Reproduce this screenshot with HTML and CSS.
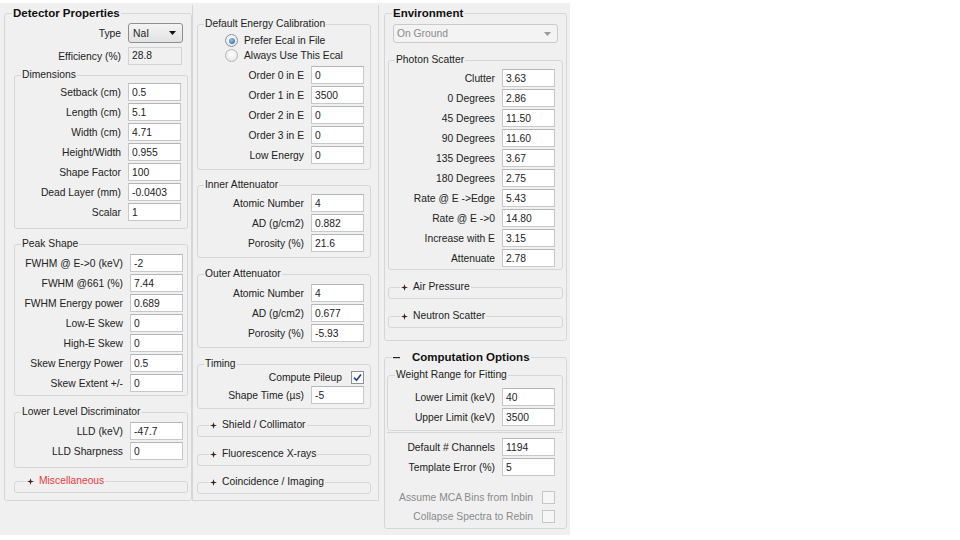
FILE: index.html
```html
<!DOCTYPE html>
<html>
<head>
<meta charset="utf-8">
<title>Detector Properties</title>
<link rel="stylesheet" href="styles.css">
</head>
<body>
<div class="app">
  <fieldset class="col1">
    <legend class="title">Detector Properties</legend>
    <div class="row k123 typerow"><label>Type</label><div class="combo nai"><span>NaI</span><svg class="arr" width="7" height="4" viewBox="0 0 7 4"><path d="M0 0H7L3.5 4Z"/></svg></div></div>
    <div class="row k123 effrow"><label>Efficiency (%)</label><div class="ro">28.8</div></div>
    <fieldset class="sub dims k113">
      <legend>Dimensions</legend>
      <div class="row"><label>Setback (cm)</label><input class="field" value="0.5"></div>
      <div class="row"><label>Length (cm)</label><input class="field" value="5.1"></div>
      <div class="row"><label>Width (cm)</label><input class="field" value="4.71"></div>
      <div class="row"><label>Height/Width</label><input class="field" value="0.955"></div>
      <div class="row"><label>Shape Factor</label><input class="field" value="100"></div>
      <div class="row"><label>Dead Layer (mm)</label><input class="field" value="-0.0403"></div>
      <div class="row"><label>Scalar</label><input class="field" value="1"></div>
    </fieldset>
    <fieldset class="sub peak k115">
      <legend>Peak Shape</legend>
      <div class="row"><label>FWHM @ E-&gt;0 (keV)</label><input class="field" value="-2"></div>
      <div class="row"><label>FWHM @661 (%)</label><input class="field" value="7.44"></div>
      <div class="row"><label>FWHM Energy power</label><input class="field" value="0.689"></div>
      <div class="row"><label>Low-E Skew</label><input class="field" value="0"></div>
      <div class="row"><label>High-E Skew</label><input class="field" value="0"></div>
      <div class="row"><label>Skew Energy Power</label><input class="field" value="0.5"></div>
      <div class="row"><label>Skew Extent +/-</label><input class="field" value="0"></div>
    </fieldset>
    <fieldset class="sub lld k115">
      <legend>Lower Level Discriminator</legend>
      <div class="row"><label>LLD (keV)</label><input class="field" value="-47.7"></div>
      <div class="row"><label>LLD Sharpness</label><input class="field" value="0"></div>
    </fieldset>
    <fieldset class="sub collapsed misc">
      <legend><svg class="mk" width="7" height="7" viewBox="0 0 7 7"><path d="M3.5 0L4.2 2.8L7 3.5L4.2 4.2L3.5 7L2.8 4.2L0 3.5L2.8 2.8Z"/><circle cx="3.5" cy="3.5" r="1"/></svg><span class="red">Miscellaneous</span></legend>
    </fieldset>
  </fieldset>

  <div class="col2">
    <fieldset class="sub2 ecal k113">
      <legend>Default Energy Calibration</legend>
      <div class="radrow"><span class="radio on"></span>Prefer Ecal in File</div>
      <div class="radrow"><span class="radio"></span>Always Use This Ecal</div>
      <div class="row gap2"><label>Order 0 in E</label><input class="field" value="0"></div>
      <div class="row"><label>Order 1 in E</label><input class="field" value="3500"></div>
      <div class="row"><label>Order 2 in E</label><input class="field" value="0"></div>
      <div class="row"><label>Order 3 in E</label><input class="field" value="0"></div>
      <div class="row"><label>Low Energy</label><input class="field" value="0"></div>
    </fieldset>
    <fieldset class="sub2 inner k113">
      <legend>Inner Attenuator</legend>
      <div class="row"><label>Atomic Number</label><input class="field" value="4"></div>
      <div class="row"><label>AD (g/cm2)</label><input class="field" value="0.882"></div>
      <div class="row"><label>Porosity (%)</label><input class="field" value="21.6"></div>
    </fieldset>
    <fieldset class="sub2 outer k113">
      <legend>Outer Attenuator</legend>
      <div class="row"><label>Atomic Number</label><input class="field" value="4"></div>
      <div class="row"><label>AD (g/cm2)</label><input class="field" value="0.677"></div>
      <div class="row"><label>Porosity (%)</label><input class="field" value="-5.93"></div>
    </fieldset>
    <fieldset class="sub2 timing k113">
      <legend>Timing</legend>
      <div class="chkrow">Compute Pileup<span class="box"><svg width="9" height="9" viewBox="0 0 9 9"><path d="M1 4.6L3.5 7.2L8 1.4"/></svg></span></div>
      <div class="row"><label>Shape Time (µs)</label><input class="field" value="-5"></div>
    </fieldset>
    <fieldset class="sub2 collapsed shield">
      <legend><svg class="mk" width="7" height="7" viewBox="0 0 7 7"><path d="M3.5 0L4.2 2.8L7 3.5L4.2 4.2L3.5 7L2.8 4.2L0 3.5L2.8 2.8Z"/><circle cx="3.5" cy="3.5" r="1"/></svg>Shield / Collimator</legend>
    </fieldset>
    <fieldset class="sub2 collapsed fluor">
      <legend><svg class="mk" width="7" height="7" viewBox="0 0 7 7"><path d="M3.5 0L4.2 2.8L7 3.5L4.2 4.2L3.5 7L2.8 4.2L0 3.5L2.8 2.8Z"/><circle cx="3.5" cy="3.5" r="1"/></svg>Fluorescence X-rays</legend>
    </fieldset>
    <fieldset class="sub2 collapsed coinc">
      <legend><svg class="mk" width="7" height="7" viewBox="0 0 7 7"><path d="M3.5 0L4.2 2.8L7 3.5L4.2 4.2L3.5 7L2.8 4.2L0 3.5L2.8 2.8Z"/><circle cx="3.5" cy="3.5" r="1"/></svg>Coincidence / Imaging</legend>
    </fieldset>
  </div>

  <div class="col3">
    <fieldset class="env">
      <legend class="title">Environment</legend>
      <div class="combo ground"><span>On Ground</span><svg class="arr" width="7" height="4" viewBox="0 0 7 4"><path d="M0 0H7L3.5 4Z"/></svg></div>
      <fieldset class="sub3 photon k113">
        <legend>Photon Scatter</legend>
        <div class="row"><label>Clutter</label><input class="field" value="3.63"></div>
        <div class="row"><label>0 Degrees</label><input class="field" value="2.86"></div>
        <div class="row"><label>45 Degrees</label><input class="field" value="11.50"></div>
        <div class="row"><label>90 Degrees</label><input class="field" value="11.60"></div>
        <div class="row"><label>135 Degrees</label><input class="field" value="3.67"></div>
        <div class="row"><label>180 Degrees</label><input class="field" value="2.75"></div>
        <div class="row"><label>Rate @ E -&gt;Edge</label><input class="field" value="5.43"></div>
        <div class="row"><label>Rate @ E -&gt;0</label><input class="field" value="14.80"></div>
        <div class="row"><label>Increase with E</label><input class="field" value="3.15"></div>
        <div class="row"><label>Attenuate</label><input class="field" value="2.78"></div>
      </fieldset>
      <fieldset class="sub3 collapsed air">
        <legend><svg class="mk" width="7" height="7" viewBox="0 0 7 7"><path d="M3.5 0L4.2 2.8L7 3.5L4.2 4.2L3.5 7L2.8 4.2L0 3.5L2.8 2.8Z"/><circle cx="3.5" cy="3.5" r="1"/></svg>Air Pressure</legend>
      </fieldset>
      <fieldset class="sub3 collapsed neutron">
        <legend><svg class="mk" width="7" height="7" viewBox="0 0 7 7"><path d="M3.5 0L4.2 2.8L7 3.5L4.2 4.2L3.5 7L2.8 4.2L0 3.5L2.8 2.8Z"/><circle cx="3.5" cy="3.5" r="1"/></svg>Neutron Scatter</legend>
      </fieldset>
    </fieldset>
    <fieldset class="comp k117">
      <legend class="title complegend"><svg class="minus" width="7" height="3" viewBox="0 0 7 3"><rect x="0" y="1" width="7" height="1.2"/></svg>Computation Options</legend>
      <fieldset class="weight k114">
        <legend>Weight Range for Fitting</legend>
        <div class="row"><label>Lower Limit (keV)</label><input class="field" value="40"></div>
        <div class="row"><label>Upper Limit (keV)</label><input class="field" value="3500"></div>
      </fieldset>
      <div class="sep"></div>
      <div class="row crow"><label>Default # Channels</label><input class="field" value="1194"></div>
      <div class="row"><label>Template Error (%)</label><input class="field" value="5"></div>
      <div class="chk3 first">Assume MCA Bins from Inbin<span class="box dis"></span></div>
      <div class="chk3">Collapse Spectra to Rebin<span class="box dis"></span></div>
    </fieldset>
  </div>
</div>
</body>
</html>
```
FILE: styles.css
```css
* { box-sizing: border-box; }
html, body { margin: 0; background: #ffffff; }
body {
  font-family: "Liberation Sans", Arial, sans-serif;
  font-size: 10.3px;
  color: #222222;
}
.app {
  display: flex;
  align-items: flex-start;
  width: 570px;
  height: 532px;
  margin-top: 3px;
  background: #f0f0f0;
}
fieldset {
  margin: 0;
  padding: 0;
  border: 1px solid #d3d7da;
  border-radius: 3px;
  min-width: 0;
}
legend {
  padding: 0 1px;
  margin-left: 6px;
  line-height: 14px;
  height: 14px;
  white-space: nowrap;
}
legend.title {
  font-weight: bold;
  font-size: 11.5px;
  margin-left: 7px;
  color: #111111;
}

/* rows */
.row { display: flex; align-items: center; height: 20px; }
.row label { flex: none; text-align: right; padding-right: 7px; white-space: nowrap; }
.k113 .row label { width: 113px; }
.k114 .row label { width: 114px; }
.k115 .row label { width: 115px; }
.k117 > .row label { width: 117px; }
.k123 label { width: 123px; }
.field {
  width: 53px;
  height: 18px;
  margin: 0;
  padding: 0 0 0 3px;
  border: 1px solid #c6c8ca;
  border-top-color: #b4b6b8;
  background: #ffffff;
  font: inherit;
  color: #222222;
  outline: none;
}

/* combos */
.combo {
  display: flex;
  align-items: center;
  justify-content: space-between;
  border: 1px solid #8e8e8e;
  border-radius: 3px;
  background: linear-gradient(#f4f4f4, #e2e2e2);
}
.nai { width: 55px; height: 20px; padding: 0 6px 0 4px; }
.arr path { fill: #111111; }
.ground {
  width: 165px;
  height: 19px;
  margin: 4px 0 0 8px;
  padding: 0 6px 0 3px;
  border-color: #cacaca;
  background: #f3f3f3;
  color: #8a8a8a;
}
.ground .arr path { fill: #9a9a9a; }
.ro {
  width: 54px;
  height: 18px;
  border: 1px solid #d2d2d2;
  background: #f0f0f0;
  padding-left: 3px;
  line-height: 16px;
}

/* column 1 */
.col1 { width: 188px; height: 495px; margin: 3px 0 0 4px; }
.typerow { margin-top: 3px; }
.effrow { height: 18px; margin-top: 4px; }
.sub { width: 174px; margin-left: 9px; }
.dims { margin-top: 3px; padding-bottom: 6px; }
.peak { margin-top: 8px; padding: 2px 0; }
.lld { margin-top: 9px; padding: 2px 0 6px; }
.misc { margin-top: 6px; }
.red { color: #f03a3a; }

/* collapsed groups */
.collapsed { height: 19px; }
.collapsed legend { margin-left: 11px; }
.mk { vertical-align: -0.5px; margin-right: 5px; }
.mk path { fill: #1e1e1e; }
.mk circle { fill: #8c1010; }

/* column 2 */
.col2 {
  width: 187px;
  height: 496px;
  margin-top: 2px;
  border: 1px solid #d3d7da;
  border-top: 0;
}
.sub2 { width: 174px; margin-left: 4px; }
.ecal { margin-top: 12px; padding: 2px 0 4px; }
.radrow { display: flex; align-items: center; height: 15px; padding-left: 27px; }
.radio {
  display: flex;
  align-items: center;
  justify-content: center;
  width: 13px;
  height: 13px;
  margin-right: 6px;
  border-radius: 50%;
  border: 1px solid #b3b6b9;
  background: radial-gradient(circle at 50% 40%, #ffffff, #e0e0e0);
}
.radio.on { border-color: #8e9296; }
.radio.on::after {
  content: "";
  width: 6px;
  height: 6px;
  border-radius: 50%;
  background: radial-gradient(circle at 40% 35%, #8cc8f5, #1b5ea6);
}
.gap2 { margin-top: 2px; }
.inner { margin-top: 8px; padding: 1px 0 4px; }
.outer { margin-top: 9px; padding: 2px 0 4px; }
.timing { margin-top: 9px; padding: 0 0 3px; }
.timing .row { margin-top: 1px; }
.chkrow {
  display: flex;
  align-items: center;
  justify-content: flex-end;
  height: 13px;
  padding-right: 6px;
}
.box {
  display: flex;
  align-items: center;
  justify-content: center;
  width: 13px;
  height: 13px;
  margin-left: 9px;
  border: 1px solid #8f9194;
  background: #ffffff;
}
.box path { fill: none; stroke: #243f8c; stroke-width: 1.6; }
.box.dis { border-color: #c6c6c6; background: #f6f6f6; }
.shield { margin-top: 9px; }
.fluor { margin-top: 10px; }
.coinc { margin-top: 9px; }

/* column 3 */
.col3 { width: 183px; margin-left: 5px; display: flex; flex-direction: column; }
.env { margin-top: 3px; padding-bottom: 12px; }
.sub3 { width: 175px; margin-left: 3px; }
.photon { margin-top: 10px; padding: 1px 0; }
.air { margin-top: 10px; }
.neutron { margin-top: 10px; }
.comp { margin-top: 9px; height: 179px; }
.complegend { margin-left: 10px; }
.minus { vertical-align: 2px; margin-right: 12px; }
.minus rect { fill: #222222; }
.weight { width: 176px; margin: 4px 0 0 2px; padding: 5px 0 3px; }
.weight legend { margin-left: 7px; }
.sep { width: 176px; height: 1px; margin: 1px 0 0 2px; background: #d3d7da; }
.crow { margin-top: 4px; }
.chk3 {
  display: flex;
  align-items: center;
  justify-content: flex-end;
  height: 19px;
  padding-right: 11px;
  color: #8a8a8a;
}
.chk3.first { margin-top: 11px; }
```
